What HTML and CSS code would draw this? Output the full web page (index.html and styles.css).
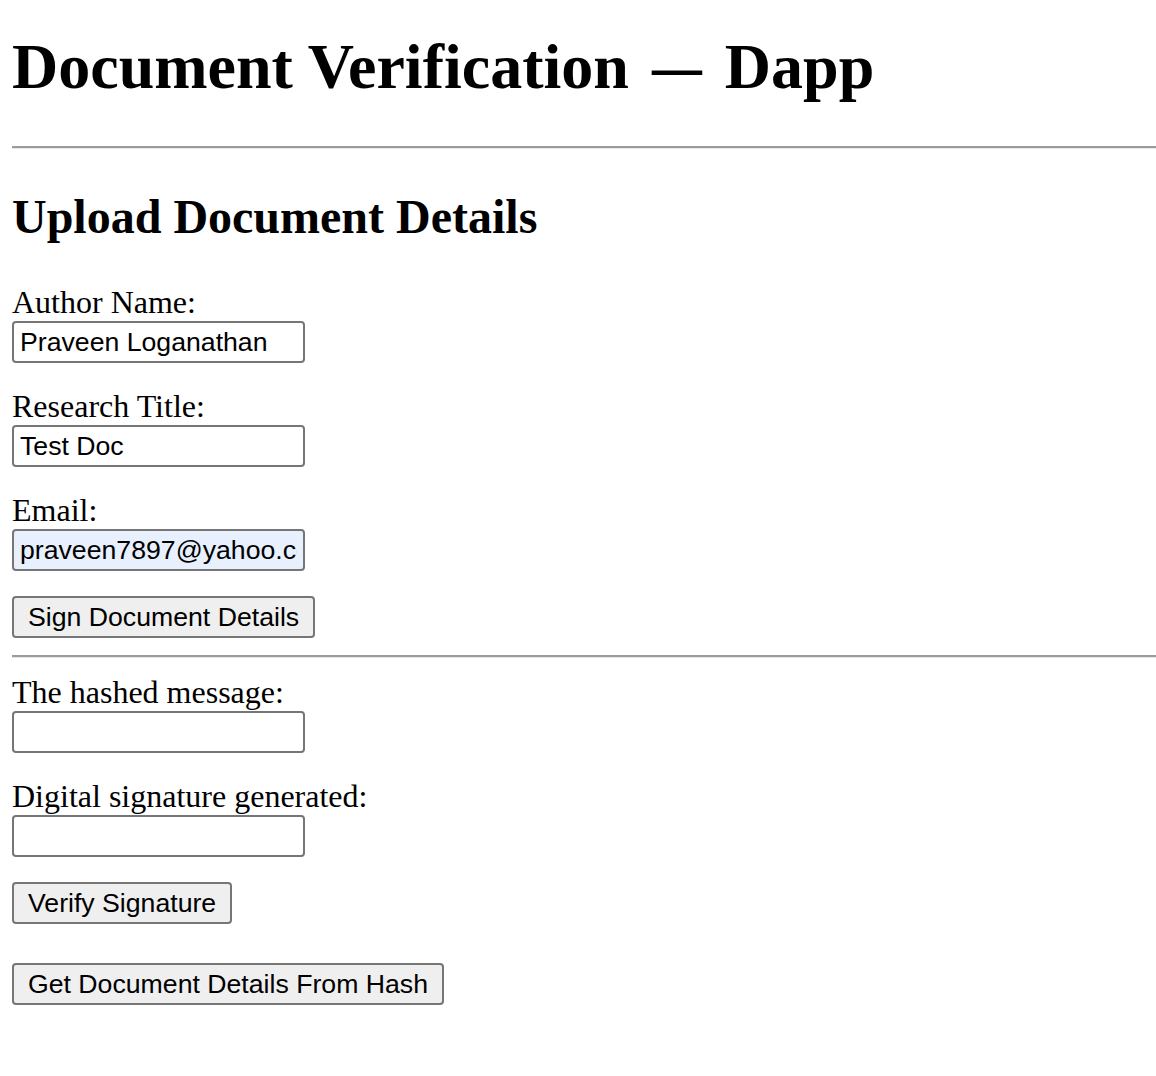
FILE: index.html
```html
<!DOCTYPE html>
<html lang="en">
<head>
<meta charset="utf-8">
<title>Document Verification — Dapp</title>
<link rel="stylesheet" href="styles.css">
</head>
<body>
<h1 class="title">Document Verification <span class="dash">—</span> Dapp</h1>
<hr class="rule rule-top">
<h2 class="subtitle">Upload Document Details</h2>
<div class="form">
  <div class="field">
    <label class="label" for="author">Author Name:</label>
    <input class="input" id="author" type="text" value="Praveen Loganathan">
  </div>
  <div class="field">
    <label class="label" for="title">Research Title:</label>
    <input class="input" id="title" type="text" value="Test Doc">
  </div>
  <div class="field">
    <label class="label" for="email">Email:</label>
    <input class="input input-autofill" id="email" type="text" value="praveen7897@yahoo.com">
  </div>
  <div class="actions">
    <button class="btn" type="button">Sign Document Details</button>
  </div>
</div>
<hr class="rule rule-mid">
<div class="form form-verify">
  <div class="field">
    <label class="label" for="hash">The hashed message:</label>
    <input class="input" id="hash" type="text">
  </div>
  <div class="field">
    <label class="label" for="sig">Digital signature generated:</label>
    <input class="input" id="sig" type="text">
  </div>
  <div class="actions">
    <button class="btn" type="button">Verify Signature</button>
  </div>
  <div class="actions actions-last">
    <button class="btn" type="button">Get Document Details From Hash</button>
  </div>
</div>
</body>
</html>
```

FILE: styles.css
```css
html, body {
  margin: 0;
  padding: 0;
  background: #ffffff;
}

body {
  padding-left: 12px;
  font-family: "Liberation Serif", "Times New Roman", serif;
  color: #000000;
}

.title {
  margin: 30px 0 0 0;
  font-size: 64px;
  line-height: 74px;
  font-weight: bold;
  white-space: nowrap;
}

.dash {
  display: inline-block;
  transform: scaleX(0.78);
}

.rule {
  margin: 0;
  border: none;
  height: 0;
  border-top: 2px solid #9b9b9b;
  border-bottom: 1px solid #e6e6e6;
}

.rule-top {
  margin-top: 42px;
}

.subtitle {
  margin: 40px 0 0 0;
  font-size: 48px;
  line-height: 56px;
  font-weight: bold;
}

.form {
  display: flex;
  flex-direction: column;
  align-items: flex-start;
  gap: 25px;
  margin-top: 39px;
}

.field {
  display: flex;
  flex-direction: column;
  align-items: flex-start;
  gap: 1px;
}

.label {
  font-size: 32px;
  line-height: 36px;
}

.input {
  box-sizing: border-box;
  width: 293px;
  height: 42px;
  margin: 0;
  padding: 0 6px;
  border: 2px solid #767676;
  border-radius: 4px;
  background: #ffffff;
  font-family: "Liberation Sans", Arial, Helvetica, sans-serif;
  font-size: 26.67px;
  color: #000000;
  outline: none;
}

.input-autofill {
  background: #e8f0fe;
}

.btn {
  box-sizing: border-box;
  height: 42px;
  margin: 0;
  padding: 0 14px;
  border: 2px solid #767676;
  border-radius: 4px;
  background: #efefef;
  font-family: "Liberation Sans", Arial, Helvetica, sans-serif;
  font-size: 26.67px;
  color: #000000;
}

.rule-mid {
  margin-top: 17px;
}

.form-verify {
  margin-top: 16px;
}

.actions-last {
  margin-top: 14px;
}
```
